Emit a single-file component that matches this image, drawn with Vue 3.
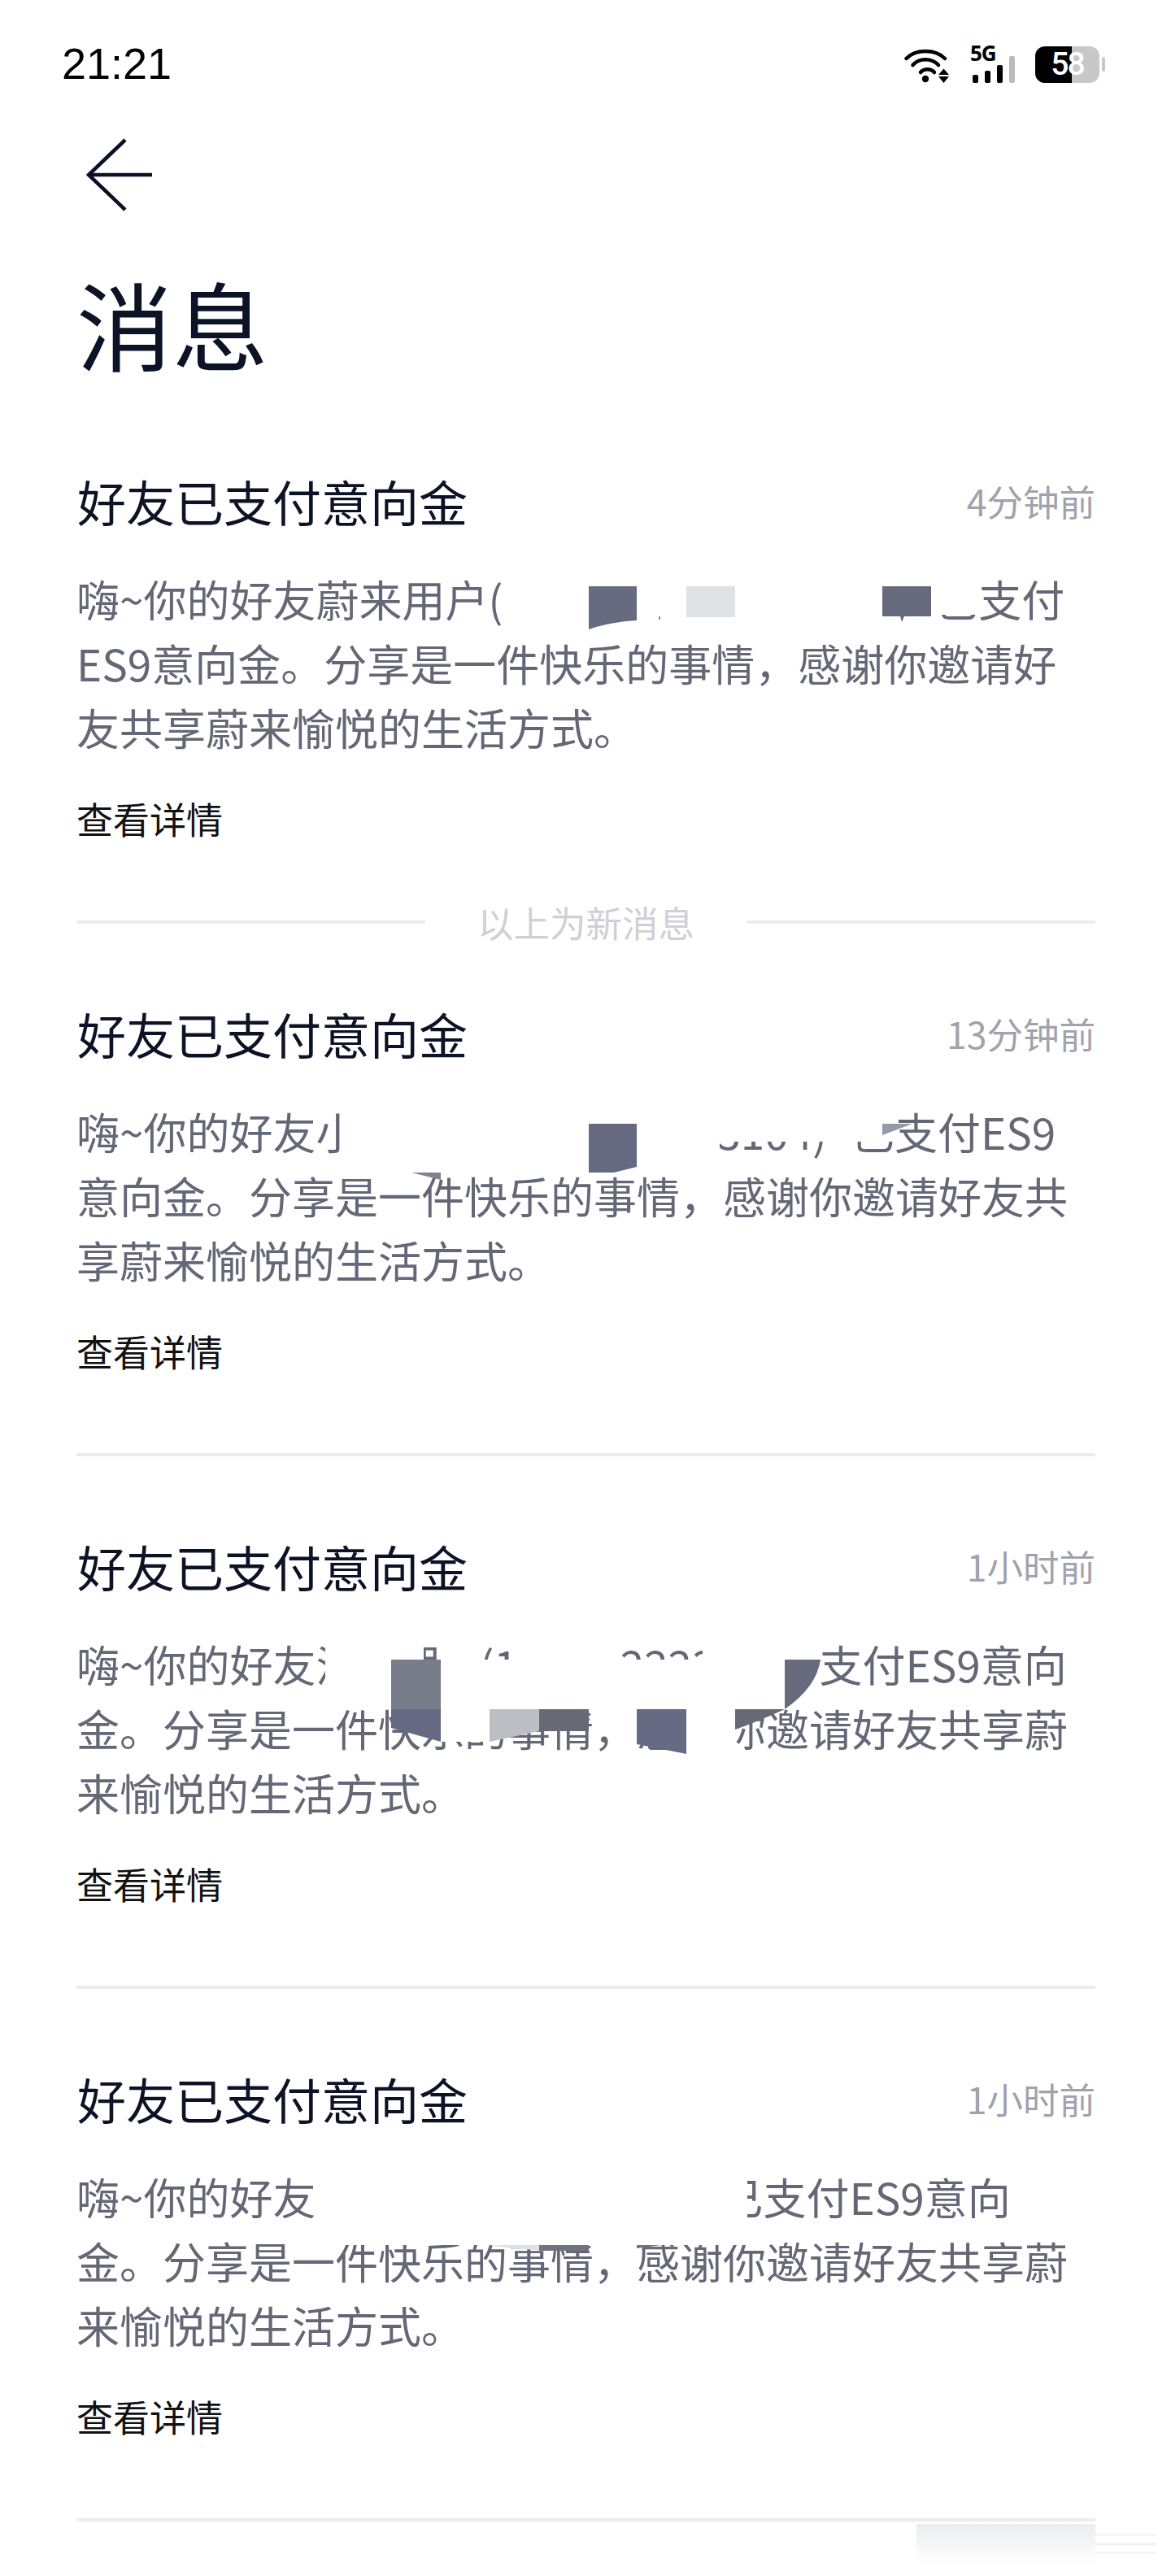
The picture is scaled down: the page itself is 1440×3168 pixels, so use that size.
<script setup>
// --- Messages ---
// a line is a list of parts: a string is text, a number is an empty gap in px
const messages = [
  {
    time: '4分钟前',
    lines: [
      ['嗨~你的好友蔚来用户(', 532, '已支付'],
      ['ES9意向金。分享是一件快乐的事情，感谢你邀请好'],
      ['友共享蔚来愉悦的生活方式。'],
    ],
    newDivider: true,
  },
  {
    time: '13分钟前',
    lines: [
      ['嗨~你的好友小', 440, '3104)', 30, '已支付ES9'],
      ['意向金。分享是一件快乐的事情，感谢你邀请好友共'],
      ['享蔚来愉悦的生活方式。'],
    ],
  },
  {
    time: '1小时前',
    lines: [
      ['嗨~你的好友泸', 48, '罗', 47, '(1', 126, '2223', 127, '支付ES9意向'],
      ['金。分享是一件快乐的事情，感谢你邀请好友共享蔚'],
      ['来愉悦的生活方式。'],
    ],
  },
  {
    time: '1小时前',
    lines: [
      ['嗨~你的好友', 497, '已支付ES9意向'],
      ['金。分享是一件快乐的事情，感谢你邀请好友共享蔚'],
      ['来愉悦的生活方式。'],
    ],
  },
]

// --- Redaction patches, in page coordinates ---
const patches = [
  // message 1
  { d: 'M630 700H1205V756H630Z', fill: '#fff' },
  { d: 'M724 721H783V763Q750 765 724 774Z', fill: '#666b80' },
  { d: 'M844 721H904V759H844Z', fill: '#e0e1e5' },
  { d: 'M1085 721H1145V758H1085Z', fill: '#666a7c' },
  { d: 'M810 758H812V762H810Z', fill: '#8a8d99' },
  { d: 'M1107 758H1112L1109 765Z', fill: '#666a7c' },
  // message 2
  { d: 'M424 1360H885V1442H424Z', fill: '#fff' },
  { d: 'M885 1360H1105V1404H885Z', fill: '#fff' },
  { d: 'M724 1382H783V1435L755 1442H724Z', fill: '#666a80' },
  { d: 'M1085 1382H1122L1085 1396Z', fill: '#969aa6' },
  { d: 'M506 1442H542V1451Z', fill: '#7f8290' },
  // message 3
  { d: 'M400 2010H521V2041H400Z', fill: '#fff' },
  { d: 'M542 2010H589V2041H542Z', fill: '#fff' },
  { d: 'M635 2010H762V2041H635Z', fill: '#fff' },
  { d: 'M864 2010H1004V2041H864Z', fill: '#fff' },
  { d: 'M400 2041H1004V2102H400Z', fill: '#fff' },
  { d: 'M481 2041H542V2102H481Z', fill: '#797c89' },
  { d: 'M481 2102H542V2142L481 2125Z', fill: '#666a82' },
  { d: 'M542 2102H602V2142H542Z', fill: '#fff' },
  { d: 'M602 2102H663V2129L602 2142Z', fill: '#bdbdc4' },
  { d: 'M663 2102H724V2129H663Z', fill: '#666a75' },
  { d: 'M783 2102H844V2157L783 2145Z', fill: '#666a82' },
  { d: 'M844 2102H904V2157H844Z', fill: '#fff' },
  { d: 'M904 2102H965V2102Q930 2118 904 2127Z', fill: '#666a75' },
  { d: 'M965 2041H1009Q1004 2075 965 2102Z', fill: '#666a7c' },
  // message 4
  { d: 'M388 2670H919V2761H388Z', fill: '#fff' },
  { d: 'M602 2761H663V2767Q630 2766 602 2761Z', fill: '#e0e1e5' },
  { d: 'M663 2761H724V2768H663Z', fill: '#70737f' },
  { d: 'M783 2761H813L783 2765Z', fill: '#70737f' },
]
</script>

<template>
  <div class="page">
    <!-- Status bar -->
    <div class="status-bar">
      <span class="clock">21:21</span>
      <div class="status-icons">
        <svg class="wifi" width="56" height="42" viewBox="0 0 56 42" fill="none" stroke="#000" stroke-linecap="round">
          <path d="M2.5 12C14 0 38 0 50 12" stroke-width="4.5" />
          <path d="M10.5 20C18 11 34 11 42 20" stroke-width="4.5" />
          <path d="M20 29C24 24 33 24 37 29" stroke-width="4.5" />
          <circle cx="26" cy="37" r="4.2" fill="#000" stroke="none" />
          <path d="M48.5 24.5L55 32H42Z M42 34H55L48.5 42Z" fill="#000" stroke="none" />
        </svg>
        <div class="signal">
          <span class="signal-label">5G</span>
          <i class="bar bar-1"></i>
          <i class="bar bar-2"></i>
          <i class="bar bar-3"></i>
          <i class="bar bar-4"></i>
        </div>
        <div class="battery">
          <div class="battery-body">
            <div class="battery-fill"></div>
            <span class="battery-level">58</span>
          </div>
          <div class="battery-cap"></div>
        </div>
      </div>
    </div>

    <!-- Nav -->
    <div class="nav">
      <svg width="84" height="90" viewBox="0 0 84 90" fill="none" stroke="#0b1024" stroke-width="4.5">
        <path d="M49 2L4 45L49 88" stroke-linejoin="miter" />
        <path d="M5 45H82" />
      </svg>
    </div>
    <h1 class="page-title">消息</h1>

    <!-- Messages -->
    <section class="list">
      <template v-for="(msg, i) in messages" :key="i">
        <article class="message" :class="{ 'is-first': i === 0 }">
          <div class="message-head">
            <h2 class="message-title">好友已支付意向金</h2>
            <span class="message-time">{{ msg.time }}</span>
          </div>
          <div class="message-body">
            <div v-for="(line, l) in msg.lines" :key="l" class="message-line">
              <template v-for="(part, p) in line" :key="p">
                <span v-if="typeof part === 'string'">{{ part }}</span>
                <span v-else class="gap" :style="{ width: part + 'px' }"></span>
              </template>
            </div>
          </div>
          <div class="message-link">查看详情</div>
        </article>
        <div v-if="msg.newDivider" class="new-divider">
          <span class="rule"></span>
          <span class="new-label">以上为新消息</span>
          <span class="rule"></span>
        </div>
        <div v-else class="rule"></div>
      </template>
    </section>

    <!-- Redaction marks over the text -->
    <svg class="redactions" width="1440" height="3168" viewBox="0 0 1440 3168">
      <defs>
        <linearGradient id="smear" x1="0" y1="0" x2="0" y2="1">
          <stop offset="0" stop-color="#ebecee" />
          <stop offset="1" stop-color="#ffffff" />
        </linearGradient>
      </defs>
      <path v-for="(p, i) in patches" :key="i" :d="p.d" :fill="p.fill" />
      <rect x="1127" y="3104" width="220" height="50" fill="url(#smear)" />
      <rect x="1347" y="3116" width="76" height="3" fill="#f4f5f6" />
      <rect x="1347" y="3127" width="76" height="3" fill="#f1f2f3" />
      <rect x="1347" y="3138" width="76" height="3" fill="#f4f5f6" />
    </svg>
  </div>
</template>

<style>
body {
  margin: 0;
  background: #fff;
}
</style>

<style scoped>
.page {
  --ink: #0d1326;
  --body: #646876;
  --muted: #a0a2ac;
  --line: #ececec;

  position: relative;
  width: 1440px;
  height: 3168px;
  overflow: hidden;
  background: #fff;
  font-family: 'Noto Sans CJK SC', 'Noto Sans', sans-serif;
  color: var(--ink);
}

/* --- Status bar --- */
.status-bar {
  display: flex;
  justify-content: space-between;
  align-items: center;
  height: 156px;
  padding: 0 81px 0 76px;
}

.clock {
  font-family: 'Liberation Sans', sans-serif;
  font-size: 54px;
  line-height: 60px;
  color: #000;
}

.status-icons {
  display: flex;
  align-items: flex-end;
  height: 47px;
}

.wifi {
  display: block;
  margin-right: 25px;
}

.signal {
  position: relative;
  display: flex;
  align-items: flex-end;
  gap: 8px;
  width: 55px;
  height: 47px;
  padding-left: 3px;
  box-sizing: border-box;
  margin-right: 25px;
}

.signal-label {
  position: absolute;
  top: -3px;
  left: 0;
  font-family: 'Noto Sans', sans-serif;
  font-weight: 700;
  font-size: 26px;
  line-height: 26px;
  letter-spacing: -1px;
  color: #000;
}

.bar {
  display: block;
  width: 7px;
  border-radius: 2px;
  background: #000;
}

.bar-1 { height: 10px; }
.bar-2 { height: 15px; }
.bar-3 { height: 22px; }
.bar-4 { height: 33px; background: #bbb; }

.battery {
  display: flex;
  align-items: center;
  gap: 3px;
}

.battery-body {
  position: relative;
  width: 79px;
  height: 45px;
  border-radius: 12px;
  overflow: hidden;
  background: #c8c8c8;
}

.battery-fill {
  width: 45px;
  height: 100%;
  background: #000;
}

.battery-level {
  position: absolute;
  top: 0;
  left: 0;
  width: 100%;
  text-align: center;
  font-family: Roboto, sans-serif;
  font-weight: 500;
  font-size: 39px;
  line-height: 45px;
  letter-spacing: -2px;
  color: #fff;
}

.battery-cap {
  width: 4px;
  height: 18px;
  border-radius: 2px;
  background: #c8c8c8;
}

/* --- Nav --- */
.nav {
  height: 118px;
  padding-left: 105px;
  display: flex;
  align-items: center;
}

.nav svg {
  display: block;
}

.page-title {
  margin: 0;
  padding-left: 94px;
  height: 252px;
  font-size: 118px;
  font-weight: 400;
  line-height: 246px;
}

/* --- Messages --- */
.list {
  padding: 0 93px 0 94px;
}

.message {
  padding: 95px 0;
}

.message.is-first {
  padding-top: 50px;
}

.message-head {
  display: flex;
  justify-content: space-between;
  align-items: center;
  height: 80px;
}

.message-title {
  margin: 0 0 0 1px;
  font-size: 60px;
  font-weight: 400;
  line-height: 80px;
  white-space: nowrap;
}

.message-time {
  font-size: 44.5px;
  line-height: 80px;
  color: var(--muted);
}

.message-body {
  margin-top: 41px;
  font-size: 53px;
  line-height: 79px;
  color: var(--body);
}

.message-line {
  display: flex;
  white-space: nowrap;
}

.gap {
  flex: none;
}

.message-link {
  margin-top: 43px;
  font-size: 45px;
  line-height: 60px;
  color: #111;
}

.rule {
  display: block;
  flex: 1;
  height: 4px;
  background: var(--line);
}

.new-divider {
  display: flex;
  align-items: center;
  gap: 64px;
  height: 4px;
}

.new-label {
  font-size: 44.5px;
  line-height: 60px;
  color: #cfd0d6;
  white-space: nowrap;
}

/* --- Redactions --- */
.redactions {
  position: absolute;
  top: 0;
  left: 0;
  pointer-events: none;
}
</style>
